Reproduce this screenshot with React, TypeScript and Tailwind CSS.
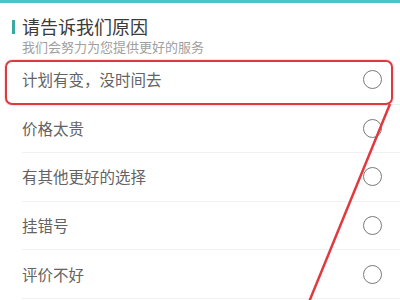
import React from 'react';

const reasons = ['计划有变，没时间去', '价格太贵', '有其他更好的选择', '挂错号', '评价不好'];

export default function App() {
  return (
    <div
      className="relative w-[400px] h-[300px] overflow-hidden bg-white"
      style={{ fontFamily: '"Noto Sans CJK SC", "Noto Sans", sans-serif' }}
    >
      <div className="h-[3px] bg-[#47c5c9]" />

      <div className="flex items-center gap-[7px] pl-[12px] pt-[13px]">
        <span className="w-[3px] h-[14px] bg-[#3aa9a4]" />
        <span className="text-[18px] leading-[21px] text-[#3a3a3a]">请告诉我们原因</span>
      </div>
      <div className="pl-[22px] pt-[2px] text-[13px] leading-[15px] text-[#a0a0a0]">我们会努力为您提供更好的服务</div>

      <div className="mt-[2px]">
        {reasons.map((r) => (
          <div key={r} className="h-[48.6px] pl-[22px]">
            <div className="h-full flex items-center justify-between pr-[18px] border-b border-[#f1f1f1]">
              <span className="text-[15.5px] text-[#636363]">{r}</span>
              <span className="w-[19px] h-[19px] rounded-full border border-[#7a7a7a]" />
            </div>
          </div>
        ))}
      </div>

      {/* annotation */}
      <div className="absolute left-[5px] top-[60px] w-[388px] h-[45px] rounded-[7px] border-2 border-[#dc3a40] shadow-[0_0_2px_rgba(220,58,64,0.5)]" />
      <svg className="absolute left-0 top-0" width="400" height="300">
        <line x1="390" y1="104" x2="309" y2="302" stroke="#e0393e" strokeWidth="2.5" />
      </svg>
    </div>
  );
}
